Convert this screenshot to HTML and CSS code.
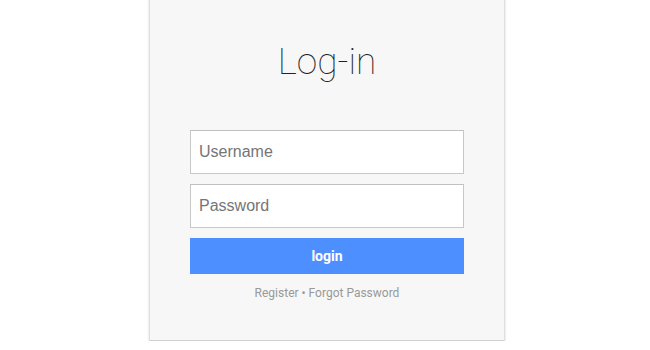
FILE: index.html
```html
<!DOCTYPE html>
<html>
<head>
<meta charset="utf-8">
<link rel="stylesheet" href="styles.css">
</head>
<body>
<div class="card">
  <h1 class="title">Log-in</h1>
  <form class="form">
    <input class="field" type="text" placeholder="Username">
    <input class="field" type="password" placeholder="Password">
    <button class="btn" type="button">login</button>
  </form>
  <div class="links"><a href="#">Register</a> • <a href="#">Forgot Password</a></div>
</div>
</body>
</html>
```
FILE: styles.css
```css
html, body {
  margin: 0;
  padding: 0;
  background: #ffffff;
}
body {
  display: flex;
  justify-content: center;
  align-items: flex-start;
  padding-left: 4px;
}
.card {
  width: 354px;
  box-sizing: border-box;
  margin-top: -6px;
  background: #f7f7f7;
  padding: 48px 40px 39px;
  border-bottom: 1px solid #d0d0d0;
  box-shadow: 0 2px 3px rgba(0,0,0,0.3), 0 0 1px rgba(0,0,0,0.07);
  font-family: Roboto, "Liberation Sans", sans-serif;
}
.title {
  margin: 0 0 48px;
  font-size: 37px;
  line-height: 40px;
  font-weight: 100;
  color: #222;
  text-align: center;
}
.form {
  display: flex;
  flex-direction: column;
  gap: 10px;
  margin: 0;
}
.field {
  box-sizing: border-box;
  height: 44px;
  width: 100%;
  margin: 0;
  padding: 0 8px;
  border: 1px solid #c8c8c8;
  border-top-color: #c0c0c0;
  background: #fff;
  font-family: "Liberation Sans", Arial, sans-serif;
  font-size: 16px;
  color: #333;
  outline: none;
}
.field::placeholder {
  color: #757575;
}
.btn {
  height: 36px;
  width: 100%;
  border: none;
  margin: 0;
  background: #4d8ffe;
  color: #fff;
  font-family: Roboto, "Liberation Sans", sans-serif;
  font-weight: 700;
  font-size: 14px;
}
.links {
  margin-top: 11px;
  text-align: center;
  font-size: 12px;
  line-height: 16px;
  color: #999;
}
.links a {
  color: #999;
  text-decoration: none;
}
```
